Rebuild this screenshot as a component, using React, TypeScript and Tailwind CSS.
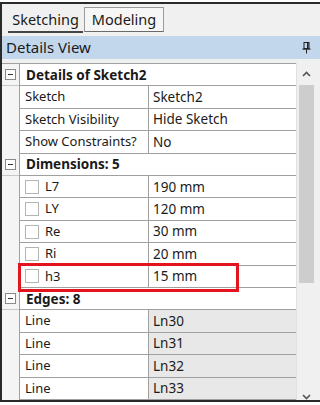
const font = { fontFamily: '"Noto Sans", "Open Sans", sans-serif' }

type Row =
  | { kind: "cat"; label: string }
  | { kind: "prop"; label: string; value: string; check?: boolean; readOnly?: boolean }

const rows: Row[] = [
  { kind: "cat", label: "Details of Sketch2" },
  { kind: "prop", label: "Sketch", value: "Sketch2" },
  { kind: "prop", label: "Sketch Visibility", value: "Hide Sketch" },
  { kind: "prop", label: "Show Constraints?", value: "No" },
  { kind: "cat", label: "Dimensions: 5" },
  { kind: "prop", label: "L7", value: "190 mm", check: true },
  { kind: "prop", label: "LY", value: "120 mm", check: true },
  { kind: "prop", label: "Re", value: "30 mm", check: true },
  { kind: "prop", label: "Ri", value: "20 mm", check: true },
  { kind: "prop", label: "h3", value: "15 mm", check: true },
  { kind: "cat", label: "Edges: 8" },
  { kind: "prop", label: "Line", value: "Ln30", readOnly: true },
  { kind: "prop", label: "Line", value: "Ln31", readOnly: true },
  { kind: "prop", label: "Line", value: "Ln32", readOnly: true },
  { kind: "prop", label: "Line", value: "Ln33", readOnly: true },
]

function MinusBox() {
  return (
    <div className="w-[11px] h-[11px] border border-[#8a8a8a] bg-white flex items-center justify-center">
      <div className="w-[5px] h-px bg-[#333]" />
    </div>
  )
}

function PinIcon() {
  return (
    <svg width="9" height="12" viewBox="0 0 9 12">
      <rect x="2" y="0.5" width="5" height="6" fill="none" stroke="#222" strokeWidth="1" />
      <rect x="5" y="1" width="1.5" height="5" fill="#222" />
      <rect x="0.5" y="6.5" width="8" height="1.2" fill="#222" />
      <rect x="4" y="7.5" width="1" height="4" fill="#222" />
    </svg>
  )
}

export default function App() {
  return (
    <div className="w-[320px] h-[405px] bg-white overflow-hidden text-[#1a1a1a]" style={font}>
      <div className="h-full pt-[2px]">
        <div className="relative h-[400px] border-t-2 border-l-2 border-b-2 border-[#2a2a2a] bg-[#f0f0f0] flex flex-col">
          {/* tabs */}
          <div className="h-[29px] flex items-end pl-[6px] shrink-0">
            <div className="w-[75px] h-[24px] flex items-center justify-center text-[14.5px] border-b-2 border-[#444]">
              Sketching
            </div>
            <div className="w-[80px] h-[25px] flex items-center justify-center text-[14.5px] border border-[#9a9a9a] border-b-[#6a6a6a] bg-[#f6f6f6] ml-px mb-[1px]">
              Modeling
            </div>
          </div>
          {/* header */}
          <div className="mt-[3px] h-[23px] bg-[#c3d7ec] flex items-center justify-between pl-[4px] pr-[9px] text-[15px] shrink-0">
            <span>Details View</span>
            <PinIcon />
          </div>
          {/* grid + scrollbar */}
          <div className="mt-[4px] flex flex-1 min-h-0">
            <div className="relative w-[294px] flex flex-col bg-white border-t border-[#a0a0a0]">
              {rows.map((r, i) =>
                r.kind === "cat" ? (
                  <div key={i} className="flex-1 flex items-stretch">
                    <div className="w-[17px] bg-[#f4f4f4] flex items-center justify-center border-b border-[#c8c8c8]">
                      <MinusBox />
                    </div>
                    <div className="flex-1 flex items-center pl-[6px] text-[13.5px] font-bold border-l border-b border-[#a0a0a0]">
                      {r.label}
                    </div>
                  </div>
                ) : (
                  <div key={i} className="flex-1 flex items-stretch">
                    <div className="w-[17px] bg-[#f4f4f4]" />
                    <div className="w-[129px] flex items-center gap-[6px] pl-[5px] text-[13px] border-l border-b border-[#a0a0a0]">
                      {r.check && <div className="w-[14px] h-[14px] border border-[#b4b4b4] bg-white" />}
                      <span>{r.label}</span>
                    </div>
                    <div
                      className={`flex-1 flex items-center pl-[4px] text-[13.5px] border-l border-b border-[#a0a0a0] ${
                        r.readOnly ? "bg-[#e8e8e8]" : "bg-white"
                      }`}
                    >
                      {r.value}
                    </div>
                  </div>
                )
              )}
              <div className="absolute left-[16px] top-[199px] w-[221px] h-[29px] border-[3px] border-[#e3141e]" />
            </div>
            {/* scrollbar */}
            <div className="w-[20px] bg-[#f0f0f0] flex flex-col items-center border-l border-[#e0e0e0]">
              <div className="h-[22px] flex items-center justify-center">
                <svg width="9" height="6" viewBox="0 0 9 6">
                  <path d="M1 5 L4.5 1.5 L8 5" fill="none" stroke="#555" strokeWidth="1.6" />
                </svg>
              </div>
              <div className="w-[15px] h-[198px] bg-[#cdcdcd]" />
              <div className="flex-1" />
              <div className="h-[8px] flex items-end justify-center">
                <svg width="9" height="6" viewBox="0 0 9 6">
                  <path d="M1 1 L4.5 4.5 L8 1" fill="none" stroke="#555" strokeWidth="1.6" />
                </svg>
              </div>
            </div>
            <div className="flex-1 bg-[#f0f0f0]" />
          </div>
        </div>
      </div>
    </div>
  )
}
